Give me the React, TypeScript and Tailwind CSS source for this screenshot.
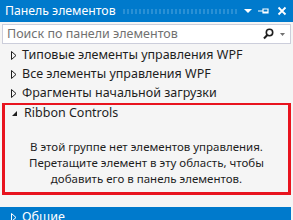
import React from "react";

const font = { fontFamily: '"Noto Sans", "Segoe UI", sans-serif' };

function Arrow({ open, white }: { open?: boolean; white?: boolean }) {
  if (open) {
    return (
      <svg width="7" height="7" viewBox="0 0 7 7" className="shrink-0">
        <path d="M6 1 L6 6 L1 6 Z" fill="#1e1e1e" />
      </svg>
    );
  }
  return (
    <svg width="6" height="9" viewBox="0 0 6 9" className="shrink-0">
      <path d="M0.5 0.5 L5 4.5 L0.5 8.5 Z" fill="none" stroke={white ? "#ffffff" : "#1e1e1e"} strokeWidth="1" />
    </svg>
  );
}

function Row({ label }: { label: string }) {
  return (
    <div className="flex items-center h-[19px] pl-[11px] gap-[5px] text-[12.5px] text-[#1e1e1e] whitespace-nowrap">
      <Arrow />
      <span>{label}</span>
    </div>
  );
}

export default function App() {
  return (
    <div className="w-[293px] h-[220px] bg-[#f5f5f5] overflow-hidden relative" style={font}>
      {/* title bar */}
      <div className="h-[22px] bg-[#007acc] flex items-center pl-[5px] pr-[6px] text-white text-[12.25px]">
        <span className="whitespace-nowrap">Панель элементов</span>
        <div
          className="flex-1 h-[5px] mx-[6px]"
          style={{
            backgroundImage: "radial-gradient(circle, #59a8de 0.6px, transparent 0.8px)",
            backgroundSize: "4px 2px",
          }}
        />
        <svg width="10" height="10" viewBox="0 0 10 10" className="mr-[5px]">
          <path d="M1 3 L9 3 L5 7 Z" fill="#fff" />
        </svg>
        <svg width="12" height="10" viewBox="0 0 12 10" className="mr-[7px]">
          <path d="M0 5 L5 5 M5 2.5 L5 7.5 M5 3 L10 3 L10 7 L5 7 M5 6 L10 6" stroke="#fff" strokeWidth="1.2" fill="none" />
        </svg>
        <svg width="10" height="10" viewBox="0 0 10 10">
          <path d="M1.5 1.5 L8.5 8.5 M8.5 1.5 L1.5 8.5" stroke="#fff" strokeWidth="1.8" />
        </svg>
      </div>
      {/* search */}
      <div className="mx-[2px] mt-[2px] h-[20px] bg-white border border-[#cccedb] flex items-center pl-[4px] pr-[5px] text-[12.5px] text-[#717171] whitespace-nowrap">
        <span className="flex-1">Поиск по панели элементов</span>
        <svg width="11" height="12" viewBox="0 0 11 12" className="mr-[6px]">
          <circle cx="6.5" cy="4.5" r="3.2" stroke="#1e1e1e" strokeWidth="1.6" fill="none" />
          <path d="M4.3 7 L1 10.5" stroke="#1e1e1e" strokeWidth="2" />
        </svg>
        <svg width="5" height="3" viewBox="0 0 5 3">
          <path d="M0 0 L5 0 L2.5 3 Z" fill="#717171" />
        </svg>
      </div>
      <div className="pt-[2px]">
        <Row label="Типовые элементы управления WPF" />
        <Row label="Все элементы управления WPF" />
        <Row label="Фрагменты начальной загрузки" />
      </div>
      {/* Ribbon Controls group */}
      <div className="mx-[2px] h-[92px] border-[3px] border-[#e8141e] border-t-2">
        <div className="flex items-center h-[17px] pl-[6px] gap-[6px] text-[12.5px] text-[#1e1e1e]">
          <Arrow open />
          <span>Ribbon Controls</span>
        </div>
        <div className="mt-[17px] text-center text-[11.5px] leading-[16px] text-[#1e1e1e] whitespace-nowrap">
          В этой группе нет элементов управления.
          <br />
          Перетащите элемент в эту область, чтобы
          <br />
          добавить его в панель элементов.
        </div>
      </div>
      {/* Общие */}
      <div className="mt-[12px] mr-[2px] h-[20px] bg-[#007acc] flex items-center pl-[11px] gap-[5px] text-white text-[12.5px]">
        <Arrow white />
        <span>Общие</span>
      </div>
    </div>
  );
}
